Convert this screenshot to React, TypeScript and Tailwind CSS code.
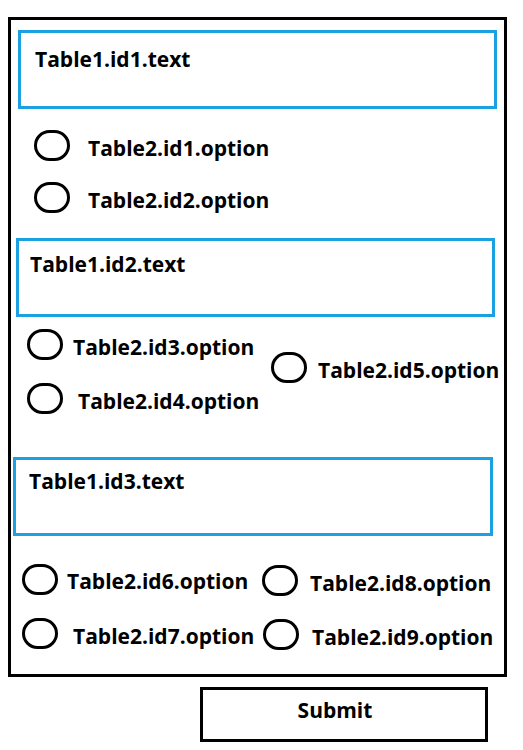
import React from "react";

interface radioItem {
  label: string;
  gap: string;
  className?: string;
}

function Radio({ label, gap, className }: radioItem) {
  return (
    <div className={`flex items-center ${gap} ${className ?? ""}`}>
      <span className="block w-[36px] h-[31px] rounded-full border-[3px] border-black shrink-0" />
      <span className="text-[21px] leading-[26px] font-bold text-black mt-[4px] whitespace-nowrap">{label}</span>
    </div>
  );
}

function QuestionBox({ text, className }: { text: string; className: string }) {
  return (
    <div className={`border-[3px] border-[#1ba1e2] h-[79px] w-[479px] ${className}`}>
      <p className="text-[21px] leading-[26px] font-bold text-black">{text}</p>
    </div>
  );
}

export default function App() {
  return (
    <div className="bg-white w-[523px] h-[750px] overflow-hidden" style={{ fontFamily: '"Open Sans", sans-serif' }}>
      <div className="ml-[8px] mt-[17px] w-[499px] h-[660px] border-[3px] border-black flex flex-col">
        <QuestionBox text="Table1.id1.text" className="ml-[7px] mt-[10px] h-[78px] pl-[14px] pt-[13px]" />

        <div className="ml-[23px] mt-[21px] flex flex-col gap-[21px]">
          <Radio label="Table2.id1.option" gap="gap-[18px]" />
          <Radio label="Table2.id2.option" gap="gap-[18px]" />
        </div>

        <QuestionBox text="Table1.id2.text" className="ml-[5px] mt-[25px] pl-[11px] pt-[10px]" />

        <div className="ml-[16px] mt-[12px] flex items-center">
          <div className="flex flex-col gap-[23px] w-[244px]">
            <Radio label="Table2.id3.option" gap="gap-[10px]" />
            <Radio label="Table2.id4.option" gap="gap-[15px]" />
          </div>
          <Radio label="Table2.id5.option" gap="gap-[11px]" className="-mt-[8px]" />
        </div>

        <QuestionBox text="Table1.id3.text" className="ml-[2px] mt-[43px] w-[480px] pl-[13px] pt-[8px]" />

        <div className="ml-[11px] mt-[26px] grid grid-cols-[240px_1fr] gap-y-[21px]">
          <Radio label="Table2.id6.option" gap="gap-[9px]" />
          <Radio label="Table2.id8.option" gap="gap-[12px]" className="mt-[3px]" />
          <Radio label="Table2.id7.option" gap="gap-[15px]" />
          <Radio label="Table2.id9.option" gap="gap-[13px]" className="mt-[2px] ml-[1px]" />
        </div>
      </div>

      <button className="ml-[200px] mt-[10px] w-[288px] h-[55px] border-[3px] border-black flex justify-center items-start pt-[7px] pr-[18px] text-[21px] leading-[26px] font-bold text-black">
        Submit
      </button>
    </div>
  );
}
